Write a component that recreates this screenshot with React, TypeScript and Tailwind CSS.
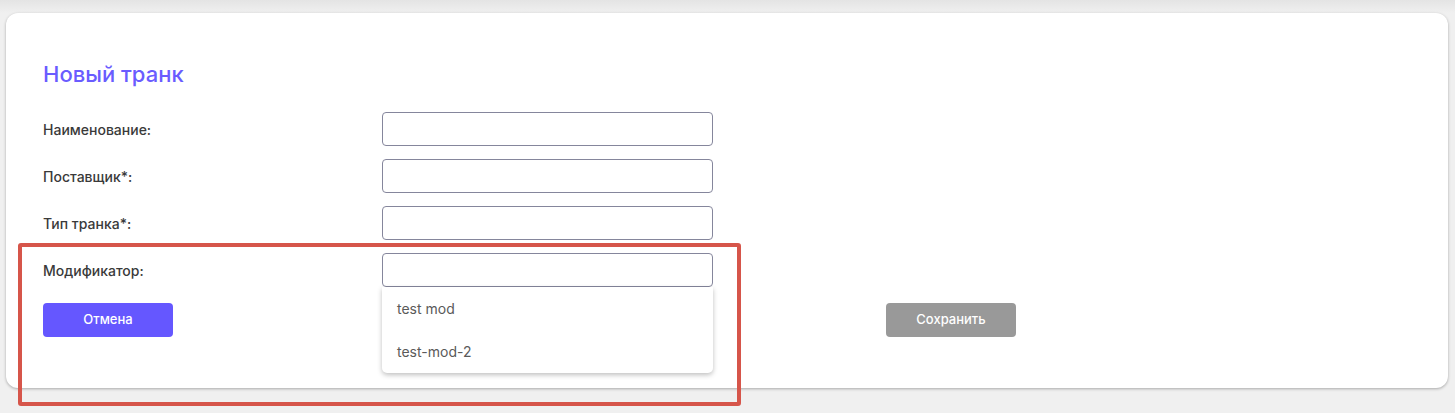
import React from "react";

const fields = ["Наименование:", "Поставщик*:", "Тип транка*:", "Модификатор:"];
const options = ["test mod", "test-mod-2"];

export default function App() {
  return (
    <div
      className="relative h-[413px] w-[1455px] overflow-hidden bg-[#f0f0f0]"
      style={{ fontFamily: "Inter, 'Noto Sans', sans-serif" }}
    >
      <div className="h-[13px] bg-gradient-to-b from-[#e4e4e4] to-[#f0f0f0]" />

      <div className="mx-[6px] mr-[7px] h-[375px] rounded-[12px] bg-white px-[37px] pt-[47px] shadow-[0_1px_3px_rgba(0,0,0,0.3)]">
        <h1 className="text-[22px] font-medium leading-[28px] text-[#6a5cff]">Новый транк</h1>

        <div className="mt-[24px] flex flex-col gap-[13px]">
          {fields.map((label, i) => (
            <div key={label} className="flex items-center">
              <div className="w-[339px] text-[14px] font-medium text-[#3a3a3a]">{label}</div>
              <div className="relative">
                <input className="h-[34px] w-[331px] rounded-[4px] border border-[#85869c] bg-white outline-none" />
                {i === fields.length - 1 && (
                  <div className="absolute left-0 top-[34px] z-10 w-[331px] rounded-b-[5px] bg-white shadow-[0_2px_5px_rgba(0,0,0,0.25)]">
                    {options.map((o) => (
                      <div key={o} className="flex h-[43px] items-center px-[15px] text-[14px] text-[#5a5a5a]">
                        {o}
                      </div>
                    ))}
                  </div>
                )}
              </div>
            </div>
          ))}
        </div>

        <div className="mt-[16px] flex w-[973px] justify-between">
          <button className="h-[34px] w-[130px] rounded-[4px] bg-[#6557ff] text-[13px] font-medium text-white">
            Отмена
          </button>
          <button className="h-[34px] w-[130px] rounded-[4px] bg-[#999999] text-[13px] font-medium text-white">
            Сохранить
          </button>
        </div>
      </div>

      <div className="pointer-events-none absolute left-[18px] top-[243px] h-[163px] w-[723px] rounded-[3px] border-[4px] border-[#d6554a]" />
    </div>
  );
}
